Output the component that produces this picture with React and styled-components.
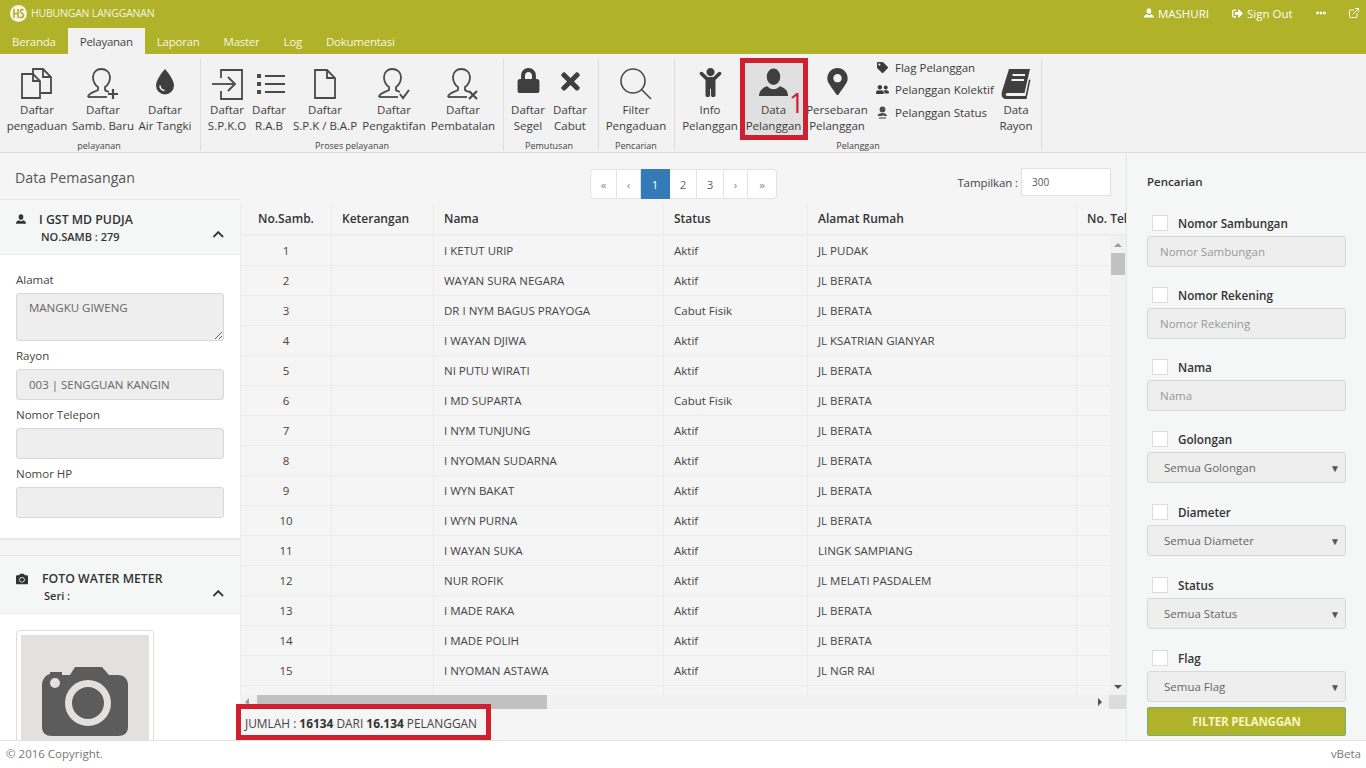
import React from "react";
import styled, { createGlobalStyle } from "styled-components";
import {
  FaSignOutAlt,
  FaEllipsisH,
  FaLock,
  FaTimes,
  FaChild,
  FaMapMarkerAlt,
  FaTag,
  FaUserFriends,
  FaCamera,
  FaChevronUp,
} from "react-icons/fa";
import { FiExternalLink } from "react-icons/fi";

const rows = [
  ["1", "I KETUT URIP", "Aktif", "JL PUDAK"],
  ["2", "WAYAN SURA NEGARA", "Aktif", "JL BERATA"],
  ["3", "DR I NYM BAGUS PRAYOGA", "Cabut Fisik", "JL BERATA"],
  ["4", "I WAYAN DJIWA", "Aktif", "JL KSATRIAN GIANYAR"],
  ["5", "NI PUTU WIRATI", "Aktif", "JL BERATA"],
  ["6", "I MD SUPARTA", "Cabut Fisik", "JL BERATA"],
  ["7", "I NYM TUNJUNG", "Aktif", "JL BERATA"],
  ["8", "I NYOMAN SUDARNA", "Aktif", "JL BERATA"],
  ["9", "I WYN BAKAT", "Aktif", "JL BERATA"],
  ["10", "I WYN PURNA", "Aktif", "JL BERATA"],
  ["11", "I WAYAN SUKA", "Aktif", "LINGK SAMPIANG"],
  ["12", "NUR ROFIK", "Aktif", "JL MELATI PASDALEM"],
  ["13", "I MADE RAKA", "Aktif", "JL BERATA"],
  ["14", "I MADE POLIH", "Aktif", "JL BERATA"],
  ["15", "I NYOMAN ASTAWA", "Aktif", "JL NGR RAI"],
  ["", "", "", ""],
];

const filters = [
  { label: "Nomor Sambungan", placeholder: "Nomor Sambungan", height: "72px" },
  { label: "Nomor Rekening", placeholder: "Nomor Rekening", height: "72px" },
  { label: "Nama", placeholder: "Nama", height: "72px" },
  { label: "Golongan", option: "Semua Golongan", height: "73px" },
  { label: "Diameter", option: "Semua Diameter", height: "73px" },
  { label: "Status", option: "Semua Status", height: "73px" },
  { label: "Flag", option: "Semua Flag", height: "64px" },
];

const pages = [
  { label: "«", width: "27px" },
  { label: "‹", width: "24px" },
  { label: "1", width: "29px", current: true },
  { label: "2", width: "27px", number: true },
  { label: "3", width: "27px", number: true },
  { label: "›", width: "24px" },
  { label: "»", width: "29px" },
];

const UserGlyph = ({ size }) => (
  <svg width={size} height={size} viewBox="0 0 30 30" fill="currentColor">
    <ellipse cx="15" cy="9" rx="7" ry="8.500" />
    <path d="M0 29C0 24 3 20.500 8.500 19C10.500 21 12.500 22 15 22C17.500 22 19.500 21 21.500 19C27 20.500 30 24 30 29Z" />
  </svg>
);

const DropIcon = () => (
  <svg width="20" height="27" viewBox="0 0 20 27">
    <path d="M10 1C10 1 19 11 19 17.500A9 9 0 0 1 1 17.500C1 11 10 1 10 1Z" fill="#3f3f3f" />
    <path d="M5 17.500A5 5 0 0 0 9.500 22.500" fill="none" stroke="#f2f2f2" strokeWidth="1.600" />
  </svg>
);

const BookIcon = () => (
  <svg width="30" height="32" viewBox="0 0 30 32" fill="#3f3f3f">
    <path d="M8 1H29L23.500 25H6.500C4 25 4 28 6.500 28H24.500L28 11.500L29.500 12L25.500 31H5C1 31 0 27 1 23.500Z" />
    <path d="M11.500 7H24M10.500 12H23" stroke="#f2f2f2" strokeWidth="2" />
  </svg>
);

const DocIcon = () => (
  <svg width="24" height="32" viewBox="0 0 24 32" fill="none" stroke="#4a4a4a" strokeWidth="1.800">
    <path d="M2 2H14L22 10V30H2Z" />
    <path d="M14 2V10H22" />
  </svg>
);

const DocsIcon = () => (
  <svg width="32" height="32" viewBox="0 0 32 32" fill="none" stroke="#4a4a4a" strokeWidth="1.800">
    <path d="M1 6H12L19 13V30H1Z" />
    <path d="M12 6V13H19" />
    <path d="M12 6V1H22L30 9V25H20" />
    <path d="M22 1V9H30" />
  </svg>
);

const EnterIcon = () => (
  <svg width="32" height="32" viewBox="0 0 32 32" fill="none" stroke="#4a4a4a" strokeWidth="1.800">
    <path d="M10 10V2H31V31H10V23" />
    <path d="M1 16H24" />
    <path d="M17 9L24 16L17 23" />
  </svg>
);

const ListIcon = () => (
  <svg width="32" height="32" viewBox="0 0 32 32" fill="#4a4a4a">
    <rect x="4" y="6" width="4" height="4" />
    <rect x="4" y="14" width="4" height="4" />
    <rect x="4" y="22" width="4" height="4" />
    <rect x="12" y="7" width="20" height="2" />
    <rect x="12" y="15" width="20" height="2" />
    <rect x="12" y="23" width="20" height="2" />
  </svg>
);

const PersonIcon = ({ mark }) => (
  <svg width="34" height="32" viewBox="0 0 34 32" fill="none" stroke="#4a4a4a" strokeWidth="1.800">
    <path d="M2 29C2 25 9 24 12 22V19C9 17 7 13 7 9C7 4 11 1 15 1C20 1 24 4 24 9C24 13 22 17 19 19V22C20 23 22 23.600 23 24" />
    <path d="M2 29H21" />
    {mark === "plus" && <path d="M27 21V31M22 26H32" strokeWidth="2.200" />}
    {mark === "check" && <path d="M23 26L26 30L32 22" strokeWidth="2" />}
    {mark === "cross" && <path d="M23 23L31 31M31 23L23 31" strokeWidth="2.200" />}
  </svg>
);

const SearchIcon = () => (
  <svg width="32" height="32" viewBox="0 0 32 32" fill="none" stroke="#4a4a4a" strokeWidth="1.600">
    <circle cx="13" cy="13" r="12" />
    <path d="M21.500 21.500L31 31" />
  </svg>
);

const StatusUserIcon = () => (
  <svg width="13" height="13" viewBox="0 0 13 13" fill="#4a4a4a">
    <circle cx="6.500" cy="3.400" r="2.900" />
    <path d="M1.500 10C2 7.800 4 7 6.500 7C9 7 10.600 7.800 11 10H8L6.800 8.600V10Z" />
    <path d="M3 12H10" stroke="#4a4a4a" strokeWidth="1.100" />
  </svg>
);

const CameraPlaceholder = () => (
  <svg width="86" height="70" viewBox="0 0 86 70">
    <path d="M28 8L33 0H60L67 8H76C82 8 86 12 86 18V60C86 66 82 69 76 69H10C4 69 0 66 0 60V18C0 12 4 8 8 7V5H20V8Z" fill="#5c5c5c" />
    <circle cx="13" cy="16" r="5" fill="#e3e0e0" />
    <circle cx="46" cy="36" r="19.500" fill="none" stroke="#e3e0e0" strokeWidth="7" />
  </svg>
);

const App = () => {
  return (
    <Page>
      <GlobalStyle />
      <Header>
        <TopBar>
          <Brand>
            <Logo>
              <svg width="17" height="17" viewBox="0 0 17 17">
                <circle cx="8.500" cy="8.500" r="8.500" fill="#f4f4e4" />
                <path d="M4 4V13M4 8.500H8M8 4V13M13.500 5C11 4 9.800 5.500 10.500 7C11 8 13.500 8.500 13.500 10.500C13.500 12.500 11 13 9.500 12" fill="none" stroke="#b0b22a" strokeWidth="1.600" />
              </svg>
            </Logo>
            HUBUNGAN LANGGANAN
          </Brand>
          <TopActions>
            <TopItem width="65px">
              <UserGlyph size={10} />
              MASHURI
            </TopItem>
            <TopItem width="62px">
              <FaSignOutAlt size={11} />
              Sign Out
            </TopItem>
            <TopIcon width="32px">
              <FaEllipsisH size={10} />
            </TopIcon>
            <TopIcon width="34px">
              <FiExternalLink size={12} />
            </TopIcon>
          </TopActions>
        </TopBar>
        <Tabs>
          <Tab>Beranda</Tab>
          <Tab active>Pelayanan</Tab>
          <Tab>Laporan</Tab>
          <Tab>Master</Tab>
          <Tab>Log</Tab>
          <Tab>Dokumentasi</Tab>
        </Tabs>
      </Header>

      <RibbonBar>
        <Group pad="0 6px 0 4px">
          <GroupItems>
            <RibbonButton width="66px">
              <IconSlot><DocsIcon /></IconSlot>
              Daftar
              <br />
              pengaduan
            </RibbonButton>
            <RibbonButton width="66px">
              <IconSlot><PersonIcon mark="plus" /></IconSlot>
              Daftar
              <br />
              Samb. Baru
            </RibbonButton>
            <RibbonButton width="58px">
              <IconSlot><DropIcon /></IconSlot>
              Daftar
              <br />
              Air Tangki
            </RibbonButton>
          </GroupItems>
          <GroupLabel>pelayanan</GroupLabel>
        </Group>
        <Group pad="0 5px">
          <GroupItems>
            <RibbonButton width="42px">
              <IconSlot><EnterIcon /></IconSlot>
              Daftar
              <br />
              S.P.K.O
            </RibbonButton>
            <RibbonButton width="42px">
              <IconSlot><ListIcon /></IconSlot>
              Daftar
              <br />
              R.A.B
            </RibbonButton>
            <RibbonButton width="70px">
              <IconSlot><DocIcon /></IconSlot>
              Daftar
              <br />
              S.P.K / B.A.P
            </RibbonButton>
            <RibbonButton width="68px">
              <IconSlot><PersonIcon mark="check" /></IconSlot>
              Daftar
              <br />
              Pengaktifan
            </RibbonButton>
            <RibbonButton width="70px">
              <IconSlot><PersonIcon mark="cross" /></IconSlot>
              Daftar
              <br />
              Pembatalan
            </RibbonButton>
          </GroupItems>
          <GroupLabel>Proses pelayanan</GroupLabel>
        </Group>
        <Group pad="0 7px 0 3px">
          <GroupItems>
            <RibbonButton width="42px">
              <IconSlot><FaLock size={25} /></IconSlot>
              Daftar
              <br />
              Segel
            </RibbonButton>
            <RibbonButton width="42px">
              <IconSlot><FaTimes size={27} /></IconSlot>
              Daftar
              <br />
              Cabut
            </RibbonButton>
          </GroupItems>
          <GroupLabel>Pemutusan</GroupLabel>
        </Group>
        <Group pad="0 5px 0 4px">
          <GroupItems>
            <RibbonButton width="66px">
              <IconSlot><SearchIcon /></IconSlot>
              Filter
              <br />
              Pengaduan
            </RibbonButton>
          </GroupItems>
          <GroupLabel>Pencarian</GroupLabel>
        </Group>
        <Group pad="0 4px">
          <GroupItems>
            <RibbonButton width="62px">
              <IconSlot><FaChild size={29} /></IconSlot>
              Info
              <br />
              Pelanggan
            </RibbonButton>
            <RibbonButton width="65px" selected>
              <IconSlot><UserGlyph size={29} /></IconSlot>
              Data
              <br />
              Pelanggan
              <Annotation />
              <AnnotationNumber>1</AnnotationNumber>
            </RibbonButton>
            <RibbonButton width="62px">
              <IconSlot><FaMapMarkerAlt size={27} /></IconSlot>
              Persebaran
              <br />
              Pelanggan
            </RibbonButton>
            <SmallList>
              <SmallItem>
                <FaTag size={11} />
                Flag Pelanggan
              </SmallItem>
              <SmallItem>
                <FaUserFriends size={13} />
                Pelanggan Kolektif
              </SmallItem>
              <SmallItem>
                <StatusUserIcon />
                Pelanggan Status
              </SmallItem>
            </SmallList>
            <RibbonButton width="42px">
              <IconSlot><BookIcon /></IconSlot>
              Data
              <br />
              Rayon
            </RibbonButton>
          </GroupItems>
          <GroupLabel>Pelanggan</GroupLabel>
        </Group>
      </RibbonBar>

      <Main>
        <LeftPanel>
          <LeftTitle>Data Pemasangan</LeftTitle>
          <PanelHead>
            <UserGlyph size={10} />
            <PanelHeading>
              <strong>I GST MD PUDJA</strong>
              <small>NO.SAMB : 279</small>
            </PanelHeading>
            <FaChevronUp size={12.500} />
          </PanelHead>
          <PanelBody>
            <FieldLabel>Alamat</FieldLabel>
            <AddressBox readOnly value="MANGKU GIWENG" />
            <FieldLabel>Rayon</FieldLabel>
            <TextBox readOnly value="003 | SENGGUAN KANGIN" />
            <FieldLabel>Nomor Telepon</FieldLabel>
            <TextBox readOnly />
            <FieldLabel>Nomor HP</FieldLabel>
            <TextBox readOnly />
          </PanelBody>
          <PhotoHead>
            <FaCamera size={12} />
            <PanelHeading>
              <strong>FOTO WATER METER</strong>
              <small>Seri :</small>
            </PanelHeading>
            <FaChevronUp size={12.500} />
          </PhotoHead>
          <PhotoBody>
            <Thumb>
              <ThumbInner>
                <CameraPlaceholder />
              </ThumbInner>
            </Thumb>
          </PhotoBody>
        </LeftPanel>

        <Center>
          <Toolbar>
            <Pager>
              {pages.map((p) => (
                <PageLink key={p.label} width={p.width} current={p.current} number={p.number}>
                  {p.label}
                </PageLink>
              ))}
            </Pager>
            <PageSize>
              Tampilkan :
              <PageSizeInput readOnly value="300" />
            </PageSize>
          </Toolbar>

          <HeadRow>
            <HeadCell width="91px" center>No.Samb.</HeadCell>
            <HeadCell width="102px">Keterangan</HeadCell>
            <HeadCell width="230px">Nama</HeadCell>
            <HeadCell width="144px">Status</HeadCell>
            <HeadCell width="269px">Alamat Rumah</HeadCell>
            <HeadCell width="120px">No. Telepon</HeadCell>
          </HeadRow>

          <TableBody>
            <Rows>
              {rows.map((row, i) => (
                <Row key={i}>
                  <Cell width="91px" center>{row[0]}</Cell>
                  <Cell width="102px" />
                  <Cell width="230px">{row[1]}</Cell>
                  <Cell width="144px">{row[2]}</Cell>
                  <Cell width="269px">{row[3]}</Cell>
                  <Cell width="120px" />
                </Row>
              ))}
            </Rows>
            <VBar>
              <ArrowUp />
              <VThumb />
              <ArrowDown />
            </VBar>
          </TableBody>

          <HBar>
            <ArrowLeft />
            <HThumb />
            <ArrowRight />
            <HCorner />
          </HBar>

          <Count>
            JUMLAH : <b>16134</b> DARI <b>16.134</b> PELANGGAN
            <CountMark />
          </Count>
        </Center>

        <RightPanel>
          <RightTitle>Pencarian</RightTitle>
          {filters.map((f) => (
            <Filter key={f.label} height={f.height}>
              <FilterHead>
                <Check type="checkbox" />
                {f.label}
              </FilterHead>
              {f.placeholder ? (
                <FilterInput readOnly placeholder={f.placeholder} />
              ) : (
                <FilterSelect>
                  {f.option}
                  <Caret>▼</Caret>
                </FilterSelect>
              )}
            </Filter>
          ))}
          <FilterButton>FILTER PELANGGAN</FilterButton>
        </RightPanel>
      </Main>

      <Footer>
        <span>© 2016 Copyright.</span>
        <span>vBeta</span>
      </Footer>
    </Page>
  );
};

export default App;

const GlobalStyle = createGlobalStyle`
  html, body {
    margin: 0;
    height: 100%;
    overflow: hidden;
  }
  * {
    box-sizing: border-box;
  }
  body {
    font-family: "Open Sans", "Noto Sans", sans-serif;
    font-size: 11.5px;
    color: #3c3c3c;
  }
`;

const Page = styled.div`
  width: 1366px;
  height: 768px;
  display: flex;
  flex-direction: column;
  overflow: hidden;
  background: #fff;
`;

const Header = styled.div`
  height: 54px;
  background: #b0b22a;
  flex: none;
`;

const TopBar = styled.div`
  height: 28px;
  display: flex;
  justify-content: space-between;
  align-items: center;
  padding: 0 6px 2px 10px;
  color: #f4f4e0;
`;

const Brand = styled.div`
  display: flex;
  align-items: center;
  gap: 4px;
  font-size: 10.5px;
  letter-spacing: -0.2px;
`;

const Logo = styled.div`
  display: flex;
  width: 17px;
  height: 17px;
`;

const TopActions = styled.div`
  display: flex;
  align-items: center;
`;

const TopItem = styled.div`
  display: flex;
  align-items: center;
  gap: 4px;
  width: ${(p) => p.width};
  margin-left: 23px;
  color: #fff;
  white-space: nowrap;
`;

const TopIcon = styled.div`
  display: flex;
  width: ${(p) => p.width};
  justify-content: flex-end;
  color: #fff;
`;

const Tabs = styled.div`
  height: 26px;
  display: flex;
`;

const Tab = styled.div`
  padding: 0 12px;
  display: flex;
  align-items: center;
  letter-spacing: -0.25px;
  background: ${(p) => (p.active ? "#f2f2f2" : "transparent")};
  color: ${(p) => (p.active ? "#444" : "#f7f7e0")};
`;

const RibbonBar = styled.div`
  height: 99px;
  flex: none;
  display: flex;
  background: #f2f2f2;
  border-bottom: 1px solid #dcdcdc;
  padding-top: 4px;
`;

const Group = styled.div`
  height: 93px;
  display: flex;
  flex-direction: column;
  padding: ${(p) => p.pad};
  border-right: 1px solid #dedede;
`;

const GroupItems = styled.div`
  height: 81px;
  flex: none;
  display: flex;
`;

const GroupLabel = styled.div`
  height: 12px;
  font-size: 9px;
  line-height: 14px;
  text-align: center;
  color: #444;
`;

const RibbonButton = styled.div`
  position: relative;
  width: ${(p) => p.width};
  height: 78px;
  text-align: center;
  line-height: 16px;
  white-space: nowrap;
  display: flex;
  flex-direction: column;
  align-items: center;
  background: ${(p) => (p.selected ? "#e0e0e0" : "transparent")};
  color: #3c3c3c;
`;

const IconSlot = styled.div`
  height: 44px;
  padding-top: 10px;
  display: flex;
  align-items: flex-start;
  justify-content: center;
  color: #3f3f3f;
`;

const Annotation = styled.div`
  position: absolute;
  left: -1px;
  top: 0;
  width: 68px;
  height: 82px;
  border: 5px solid #d01f2e;
`;

const AnnotationNumber = styled.div`
  position: absolute;
  left: 48px;
  top: 30px;
  font-size: 27px;
  line-height: 30px;
  color: #c8232f;
`;

const SmallList = styled.div`
  width: 127px;
  padding-left: 8px;
  display: flex;
  flex-direction: column;
  gap: 4.500px;
`;

const SmallItem = styled.div`
  display: flex;
  align-items: center;
  gap: 6px;
  height: 18px;
  white-space: nowrap;
  svg {
    width: 13px;
    flex: none;
  }
`;

const Main = styled.div`
  flex: 1;
  min-height: 0;
  display: flex;
  overflow: hidden;
  background: #f5f5f5;
`;

const LeftPanel = styled.div`
  width: 240px;
  flex: none;
  overflow: hidden;
  background: #f5f5f5;
`;

const LeftTitle = styled.div`
  height: 47px;
  padding: 15px 15px 0;
  font-size: 14.200px;
  line-height: 20px;
  color: #555;
  border-bottom: 1px solid #e6e6e6;
`;

const PanelHead = styled.div`
  height: 55px;
  display: flex;
  align-items: flex-start;
  padding: 11px 16px 0;
  background: #f5f7f7;
  border-bottom: 1px solid #eaeaea;
  color: #333;
  > svg:last-child {
    margin: 17px 0 0 auto;
  }
  > svg:first-child {
    margin-top: 3px;
  }
`;

const PhotoHead = styled(PanelHead)`
  height: 59px;
  padding-top: 14px;
  border-top: 1px solid #e6e6e6;
  > svg:first-child + div {
    margin-left: 14px;
  }
  strong {
    font-size: 11.900px;
  }
  small {
    padding-left: 0;
  }
`;

const PanelHeading = styled.div`
  margin-left: 13px;
  display: flex;
  flex-direction: column;
  line-height: 17px;
  strong {
    font-size: 12.300px;
    font-weight: 600;
  }
  small {
    font-size: 11px;
    font-weight: 600;
    padding-left: 2px;
  }
`;

const PanelBody = styled.div`
  height: 285px;
  background: #fff;
  padding: 17px 16px 0;
  border-bottom: 2px solid #e8e8e8;
  margin-bottom: 15px;
`;

const FieldLabel = styled.div`
  height: 21px;
  line-height: 16px;
  color: #444;
`;

const TextBox = styled.input`
  display: block;
  width: 208px;
  height: 31px;
  margin-bottom: 7px;
  padding: 0 12px;
  border: 1px solid #d8d8d8;
  border-radius: 3px;
  background: #eee;
  font: inherit;
  color: #666;
  outline: none;
`;

const AddressBox = styled.textarea`
  display: block;
  width: 208px;
  height: 48px;
  margin-bottom: 7px;
  padding: 6px 12px;
  border: 1px solid #d8d8d8;
  border-radius: 3px;
  background: #eee;
  font: inherit;
  color: #666;
  outline: none;
  resize: vertical;
`;

const PhotoBody = styled.div`
  height: 140px;
  padding: 16px;
  background: #fff;
`;

const Thumb = styled.div`
  width: 138px;
  height: 160px;
  padding: 4px;
  border: 1px solid #ddd;
  border-radius: 4px;
`;

const ThumbInner = styled.div`
  height: 100%;
  display: flex;
  justify-content: center;
  align-items: flex-start;
  padding-top: 32px;
  background: #e3e0e0;
`;

const Center = styled.div`
  position: relative;
  z-index: 1;
  width: 887px;
  flex: none;
  display: flex;
  flex-direction: column;
  background: #f5f5f5;
  border-right: 1px solid #e6e6e6;
`;

const Toolbar = styled.div`
  height: 51px;
  flex: none;
  display: flex;
  align-items: flex-start;
  padding: 16px 15px 0 350px;
`;

const Pager = styled.div`
  height: 30px;
  display: flex;
`;

const PageLink = styled.div`
  width: ${(p) => p.width};
  height: 30px;
  display: flex;
  align-items: center;
  justify-content: center;
  border: 1px solid ${(p) => (p.current ? "#337ab7" : "#e3e3e3")};
  border-left-width: 0;
  background: ${(p) => (p.current ? "#337ab7" : "#fff")};
  color: ${(p) => (p.current ? "#fff" : p.number ? "#666" : "#888")};
  &:first-child {
    border-left-width: 1px;
    border-radius: 4px 0 0 4px;
  }
  &:last-child {
    border-radius: 0 4px 4px 0;
  }
`;

const PageSize = styled.div`
  height: 28px;
  margin: -1px 0 0 auto;
  display: flex;
  align-items: center;
  gap: 3px;
  letter-spacing: -0.1px;
  white-space: nowrap;
  color: #444;
`;

const PageSizeInput = styled.input`
  width: 90px;
  height: 28px;
  padding: 0 10px;
  border: 1px solid #e0e0e0;
  background: #fff;
  font: inherit;
  font-size: 10px;
  color: #555;
  outline: none;
`;

const HeadRow = styled.div`
  height: 32px;
  flex: none;
  display: flex;
  overflow: hidden;
  border-bottom: 2px solid #ececec;
`;

const HeadCell = styled.div`
  width: ${(p) => p.width};
  flex: none;
  padding: 0 10px 2px;
  display: flex;
  align-items: center;
  justify-content: ${(p) => (p.center ? "center" : "flex-start")};
  border-left: 1px solid #ececec;
  font-weight: 600;
  font-size: 12px;
  white-space: nowrap;
  color: #333;
`;

const TableBody = styled.div`
  height: 459px;
  flex: none;
  display: flex;
  overflow: hidden;
`;

const Rows = styled.div`
  width: 870px;
  flex: none;
  overflow: hidden;
`;

const Row = styled.div`
  height: 30px;
  display: flex;
  border-bottom: 1px solid #ececec;
`;

const Cell = styled.div`
  width: ${(p) => p.width};
  flex: none;
  padding: 0 10px;
  display: flex;
  align-items: center;
  justify-content: ${(p) => (p.center ? "center" : "flex-start")};
  border-left: 1px solid #ececec;
  white-space: nowrap;
  color: #444;
`;

const VBar = styled.div`
  width: 16px;
  flex: none;
  display: flex;
  flex-direction: column;
  align-items: center;
  background: #f1f1f1;
`;

const VThumb = styled.div`
  width: 14px;
  height: 22px;
  margin-top: 6px;
  background: #c1c1c1;
`;

const ArrowUp = styled.div`
  margin-top: 7px;
  border: 4px solid transparent;
  border-top: 0;
  border-bottom: 4px solid #a0a0a0;
`;

const ArrowDown = styled.div`
  margin-top: auto;
  margin-bottom: 6px;
  border: 4px solid transparent;
  border-bottom: 0;
  border-top: 4px solid #505050;
`;

const HBar = styled.div`
  height: 14px;
  flex: none;
  display: flex;
  align-items: center;
  background: #f1f1f1;
`;

const HThumb = styled.div`
  width: 290px;
  height: 14px;
  margin-left: 8px;
  background: #c1c1c1;
`;

const ArrowLeft = styled.div`
  margin-left: 5px;
  border: 4px solid transparent;
  border-left: 0;
  border-right: 4px solid #a0a0a0;
`;

const ArrowRight = styled.div`
  margin-left: auto;
  border: 4px solid transparent;
  border-right: 0;
  border-left: 4px solid #505050;
`;

const HCorner = styled.div`
  width: 17px;
  height: 14px;
  margin-left: 7px;
  background: #dcdcdc;
`;

const Count = styled.div`
  flex: 1;
  padding: 6px 0 0 5px;
  font-size: 11.900px;
  color: #444;
  white-space: pre;
  b {
    font-weight: 700;
    color: #333;
  }
`;

const CountMark = styled.div`
  position: absolute;
  left: -4px;
  bottom: 0;
  width: 255px;
  height: 36px;
  border: 5px solid #d01f2e;
`;

const RightPanel = styled.div`
  width: 239px;
  flex: none;
  padding: 20px 20px 0;
  background: #f5f7f7;
`;

const RightTitle = styled.div`
  height: 35px;
  line-height: 18px;
  font-weight: 600;
  color: #333;
`;

const Filter = styled.div`
  height: ${(p) => p.height};
`;

const FilterHead = styled.div`
  height: 28px;
  padding: 1px 0 0 5px;
  display: flex;
  align-items: center;
  gap: 10px;
  font-size: 11.700px;
  font-weight: 600;
  color: #333;
`;

const Check = styled.input`
  appearance: none;
  width: 16px;
  height: 16px;
  margin: 0;
  background: #fff;
  border: 1px solid #dcdcdc;
`;

const FilterInput = styled.input`
  display: block;
  width: 199px;
  height: 31px;
  padding: 0 12px;
  border: 1px solid #d8d8d8;
  border-radius: 3px;
  background: #eee;
  font: inherit;
  color: #666;
  outline: none;
  &::placeholder {
    color: #999;
  }
`;

const FilterSelect = styled.div`
  width: 199px;
  height: 31px;
  padding: 0 5px 0 16px;
  display: flex;
  align-items: center;
  justify-content: space-between;
  border: 1px solid #d8d8d8;
  border-radius: 3px;
  background: #eee;
  color: #666;
`;

const Caret = styled.span`
  font-size: 10px;
  color: #555;
`;

const FilterButton = styled.div`
  width: 199px;
  height: 29px;
  display: flex;
  align-items: center;
  justify-content: center;
  border: 1px solid #6fae7c;
  border-radius: 2px;
  background: #b0b22a;
  font-weight: 700;
  letter-spacing: -0.2px;
  color: #f6f6c0;
`;

const Footer = styled.div`
  height: 28px;
  flex: none;
  display: flex;
  justify-content: space-between;
  align-items: center;
  padding: 0 5px 2px 6px;
  font-size: 11.500px;
  background: #fff;
  border-top: 1px solid #e2e2e2;
  color: #777;
`;
